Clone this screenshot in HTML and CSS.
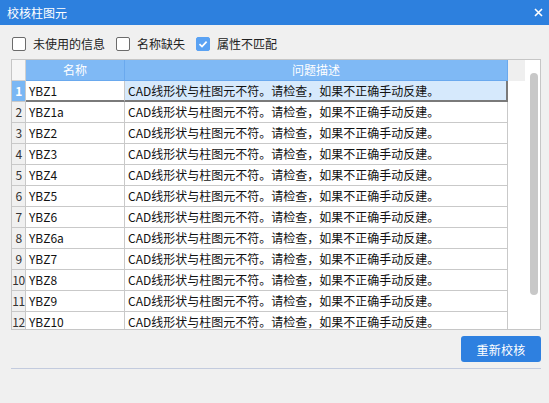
FILE: index.html
```html
<!DOCTYPE html>
<html lang="zh">
<head>
<meta charset="utf-8">
<title>校核柱图元</title>
<link rel="stylesheet" href="styles.css">
</head>
<body>
<div class="titlebar">
  <span class="title">校核柱图元</span>
  <svg class="close" width="9" height="9" viewBox="0 0 9 9"><path d="M1 1 L8 8 M8 1 L1 8" stroke="#fff" stroke-width="1.6" fill="none"/></svg>
</div>
<div class="options">
  <label class="opt"><span class="box"></span><span>未使用的信息</span></label>
  <label class="opt"><span class="box"></span><span>名称缺失</span></label>
  <label class="opt"><span class="box checked"><svg width="10" height="10" viewBox="0 0 10 10"><path d="M1.5 5.2 L4 7.6 L8.6 2.6" stroke="#fff" stroke-width="1.7" fill="none"/></svg></span><span>属性不匹配</span></label>
</div>
<div class="table">
  <div class="grid">
    <div class="head">
      <div class="hnum"></div>
      <div class="hname">名称</div>
      <div class="hdesc">问题描述</div>
      <div class="hfill"></div>
    </div>
    <div class="row sel"><div class="num">1</div><div class="name">YBZ1</div><div class="desc">CAD线形状与柱图元不符。请检查，如果不正确手动反建。</div></div>
    <div class="row"><div class="num">2</div><div class="name">YBZ1a</div><div class="desc">CAD线形状与柱图元不符。请检查，如果不正确手动反建。</div></div>
    <div class="row"><div class="num">3</div><div class="name">YBZ2</div><div class="desc">CAD线形状与柱图元不符。请检查，如果不正确手动反建。</div></div>
    <div class="row"><div class="num">4</div><div class="name">YBZ3</div><div class="desc">CAD线形状与柱图元不符。请检查，如果不正确手动反建。</div></div>
    <div class="row"><div class="num">5</div><div class="name">YBZ4</div><div class="desc">CAD线形状与柱图元不符。请检查，如果不正确手动反建。</div></div>
    <div class="row"><div class="num">6</div><div class="name">YBZ5</div><div class="desc">CAD线形状与柱图元不符。请检查，如果不正确手动反建。</div></div>
    <div class="row"><div class="num">7</div><div class="name">YBZ6</div><div class="desc">CAD线形状与柱图元不符。请检查，如果不正确手动反建。</div></div>
    <div class="row"><div class="num">8</div><div class="name">YBZ6a</div><div class="desc">CAD线形状与柱图元不符。请检查，如果不正确手动反建。</div></div>
    <div class="row"><div class="num">9</div><div class="name">YBZ7</div><div class="desc">CAD线形状与柱图元不符。请检查，如果不正确手动反建。</div></div>
    <div class="row"><div class="num">10</div><div class="name">YBZ8</div><div class="desc">CAD线形状与柱图元不符。请检查，如果不正确手动反建。</div></div>
    <div class="row"><div class="num">11</div><div class="name">YBZ9</div><div class="desc">CAD线形状与柱图元不符。请检查，如果不正确手动反建。</div></div>
    <div class="row"><div class="num">12</div><div class="name">YBZ10</div><div class="desc">CAD线形状与柱图元不符。请检查，如果不正确手动反建。</div></div>
  </div>
  <div class="vscroll"><div class="thumb"></div></div>
</div>
<div class="footer">
  <button class="btn">重新校核</button>
</div>
<div class="sep"></div>
</body>
</html>
```
FILE: styles.css
```css
* { box-sizing: border-box; }
html, body {
  margin: 0;
  padding: 0;
  background: #f0f0f0;
  font-family: "Noto Sans CJK SC", "Noto Sans", sans-serif;
  font-size: 12px;
  color: #1a1a1a;
}
.titlebar {
  height: 25px;
  background: #2d80de;
  color: #fff;
  display: flex;
  align-items: center;
  justify-content: space-between;
  padding: 0 6px 0 7px;
}
.title { font-size: 12px; line-height: 25px; }
.close { display: block; margin-top: -1px; }

.options {
  display: flex;
  align-items: center;
  height: 14px;
  margin: 12px 0 0 12px;
  gap: 11px;
}
.opt {
  display: flex;
  align-items: center;
  gap: 7px;
  line-height: 14px;
  color: #222;
}
.box {
  width: 14px;
  height: 14px;
  border: 1px solid #6b6b6b;
  border-radius: 2px;
  background: #fff;
  display: flex;
  align-items: center;
  justify-content: center;
}
.box.checked {
  background: #5aa2f3;
  border-color: #5aa2f3;
}

.table {
  margin: 8px 0 0 11px;
  width: 530px;
  height: 271px;
  border: 1px solid #c6c6c6;
  background: #fff;
  display: flex;
  overflow: hidden;
}
.grid {
  width: 513px;
  display: flex;
  flex-direction: column;
}
.head {
  display: flex;
  height: 21px;
  flex: none;
}
.hnum {
  width: 14px;
  background: #f6f6f6;
  border-right: 1px solid #d0d0d0;
  border-bottom: 1px solid #d0d0d0;
}
.hname, .hdesc {
  background: #7fb9f5;
  color: #fff;
  text-align: center;
  line-height: 20px;
  border-right: 1px solid #6aa9ee;
  border-bottom: 1px solid #6aa9ee;
}
.hname { width: 99px; }
.hdesc { width: 383px; }
.hfill {
  width: 17px;
  background: #efefef;
}
.row {
  display: flex;
  height: 21px;
  flex: none;
  width: 496px;
}
.row > div {
  border-right: 1px solid #c9c9c9;
  border-bottom: 1px solid #c9c9c9;
  line-height: 20px;
  white-space: nowrap;
  overflow: hidden;
}
.num {
  width: 14px;
  background: #f0f0f0;
  text-align: center;
  color: #333;
  letter-spacing: -0.5px;
}
.name {
  width: 99px;
  padding-left: 3px;
  color: #111;
}
.desc {
  width: 383px;
  padding-left: 3px;
  color: #111;
}
.row.sel .num {
  background: #7ab7f4;
  color: #fff;
  font-weight: bold;
}
.row.sel .name {
  border-bottom: 2px solid #7a7a7a;
  line-height: 19px;
}
.row.sel .desc {
  background: #d6e9fc;
  border-bottom: 2px solid #7a7a7a;
  border-right: 2px solid #7a7a7a;
  line-height: 19px;
}
.vscroll {
  width: 15px;
  background: #fff;
  padding: 13px 0 0 5px;
}
.thumb {
  width: 8px;
  height: 222px;
  border-radius: 4px;
  background: #c8c8c8;
}

.footer {
  display: flex;
  justify-content: flex-end;
  margin: 6px 8px 0 0;
}
.btn {
  width: 80px;
  height: 26px;
  border: none;
  border-radius: 3px;
  background: #2e80e0;
  color: #fff;
  font-family: "Noto Sans CJK SC", sans-serif;
  font-size: 12px;
  padding: 0;
  letter-spacing: 0.3px;
}
.sep {
  margin: 6px 0 0 11px;
  width: 530px;
  height: 1px;
  background: #c3cbde;
}
```
